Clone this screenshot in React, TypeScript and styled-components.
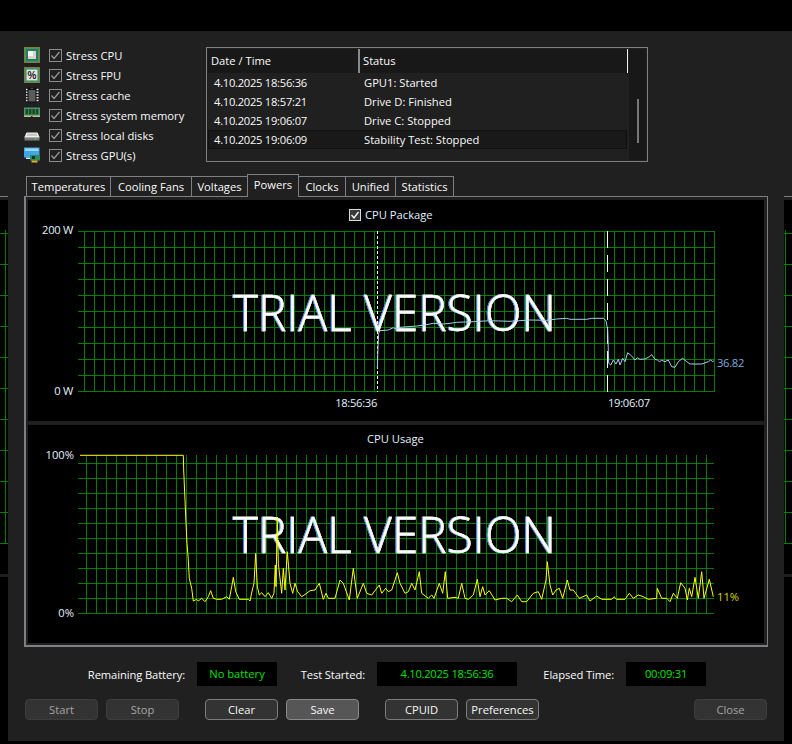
import React from 'react'
import styled, { createGlobalStyle } from 'styled-components'

const GlobalStyle = createGlobalStyle`
    html, body {
        margin: 0;
        padding: 0;
        background: #000;
    }
    body {
        font-family: "Open Sans", "Noto Sans", sans-serif;
        font-size: 11.2px;
        color: #fafafa;
    }
`

const FRAME = '#7e7e84'

const stressItems = [
    { label: 'Stress CPU', icon: 'cpu' },
    { label: 'Stress FPU', icon: 'fpu' },
    { label: 'Stress cache', icon: 'cache' },
    { label: 'Stress system memory', icon: 'memory' },
    { label: 'Stress local disks', icon: 'disk' },
    { label: 'Stress GPU(s)', icon: 'gpu' },
]

const logRows = [
    { time: '4.10.2025 18:56:36', status: 'GPU1: Started' },
    { time: '4.10.2025 18:57:21', status: 'Drive D: Finished' },
    { time: '4.10.2025 19:06:07', status: 'Drive C: Stopped' },
    { time: '4.10.2025 19:06:09', status: 'Stability Test: Stopped', selected: true },
]

const tabs = [
    { label: 'Temperatures', width: 85 },
    { label: 'Cooling Fans', width: 82 },
    { label: 'Voltages', width: 57 },
    { label: 'Powers', width: 52, active: true },
    { label: 'Clocks', width: 48 },
    { label: 'Unified', width: 51 },
    { label: 'Statistics', width: 59 },
]

// values read off the picture, in zoomed crop coordinates (3x), converted below
const toPage = (pts: number[][], ox: number, oy: number) =>
    pts.map(([x, y]) => `${(ox + x / 3).toFixed(1)},${(oy + y / 3).toFixed(1)}`).join(' ')

const powerLine = [
    toPage([[1132, 535], [1134, 470], [1136, 430], [1140, 422], [1165, 420], [1180, 413], [1190, 418], [1200, 412]], 0, 190),
    toPage([[0, 412], [50, 408], [75, 405], [100, 400], [130, 402], [150, 400], [170, 397], [220, 395], [270, 392], [330, 394], [390, 390], [440, 391], [470, 387], [500, 385], [510, 388], [560, 388], [575, 385], [610, 385], [618, 392], [623, 420], [625, 480], [626, 520], [632, 525], [640, 510], [648, 522], [655, 508], [660, 525], [668, 505], [675, 515], [683, 488], [695, 498], [705, 510], [712, 503], [720, 508], [735, 507], [748, 500], [755, 494], [765, 508], [772, 510], [778, 515], [785, 511], [795, 515], [805, 510], [815, 530], [825, 532], [835, 515], [848, 505], [860, 515], [870, 522], [905, 522], [925, 515], [932, 510], [938, 515], [942, 512]], 400, 190),
].join(' ')

const usageLine = [
    toPage([[240, 106], [550, 106], [551, 150], [555, 240], [558, 310], [561, 370], [565, 420], [568, 475], [575, 505], [580, 543], [590, 538], [595, 543], [605, 535], [615, 545], [625, 530], [632, 512], [640, 535], [650, 538], [665, 538], [680, 530], [688, 538], [695, 500], [700, 472], [707, 515], [718, 538], [745, 538], [750, 543], [757, 510], [762, 490], [767, 400], [772, 500], [778, 525], [785, 518], [795, 530], [805, 518], [815, 535], [822, 520], [826, 435], [828, 500], [832, 292], [835, 430], [845, 520], [850, 445], [855, 510], [862, 395], [870, 490], [878, 520], [885, 490], [893, 515], [905, 530], [920, 520], [930, 512], [945, 510], [958, 490], [970, 538], [978, 520], [985, 535], [1005, 535], [1020, 480], [1030, 490], [1048, 540], [1060, 445], [1072, 535], [1090, 490], [1100, 520], [1115, 525], [1138, 495], [1145, 520], [1157, 505], [1165, 515], [1175, 510], [1185, 480], [1192, 458]], 0, 420),
    toPage([[0, 490], [15, 520], [25, 515], [35, 490], [45, 510], [58, 455], [65, 520], [85, 535], [95, 525], [102, 535], [118, 490], [128, 520], [136, 455], [143, 535], [165, 532], [175, 535], [185, 490], [195, 535], [205, 538], [220, 525], [232, 478], [240, 530], [248, 500], [255, 525], [268, 512], [285, 540], [305, 535], [320, 535], [335, 545], [352, 525], [365, 545], [380, 545], [400, 520], [415, 515], [425, 538], [438, 480], [442, 425], [450, 495], [458, 525], [468, 510], [478, 505], [488, 535], [502, 480], [510, 510], [520, 510], [538, 535], [560, 525], [570, 543], [590, 528], [605, 538], [635, 538], [642, 530], [650, 538], [675, 538], [688, 520], [700, 535], [715, 525], [730, 530], [745, 538], [770, 535], [772, 505], [785, 535], [800, 535], [810, 545], [820, 520], [832, 535], [842, 488], [855, 505], [862, 540], [868, 505], [875, 530], [885, 472], [895, 535], [905, 455], [912, 535], [928, 478], [940, 530]], 400, 420),
].join(' ')

const range = (count: number, start: number, step: number) =>
    Array.from({ length: count }, (_, i) => start + i * step)

const ChipFrame: React.FC<{ children: React.ReactNode }> = ({ children }) => (
    <svg width="16" height="16" viewBox="0 0 16 16">
        <rect x="0.5" y="0.5" width="15" height="15" fill="#2c7a58" stroke="#e0ad3a" strokeDasharray="1 1" />
        <rect x="1.5" y="1.5" width="13" height="13" fill="none" stroke="#3f9470" />
        {children}
    </svg>
)

const StressIcon: React.FC<{ kind: string }> = ({ kind }) => {
    if (kind === 'cpu') {
        return (
            <ChipFrame>
                <rect x="4" y="4" width="8" height="8" fill="#d4d4d0" />
                <rect x="4" y="4" width="5" height="5" fill="#f4f4f2" />
            </ChipFrame>
        )
    }
    if (kind === 'fpu') {
        return (
            <ChipFrame>
                <rect x="2.5" y="2.5" width="11" height="11" fill="#e4e6de" />
                <text x="8" y="12" textAnchor="middle" fontSize="10" fontWeight="700" fontFamily="Liberation Sans" fill="#222">%</text>
            </ChipFrame>
        )
    }
    if (kind === 'cache') {
        return (
            <svg width="16" height="16" viewBox="0 0 16 16">
                {range(5, 2.5, 2.75).map(y => (
                    <path key={y} d={`M2 ${y}H14.5`} stroke="#e8e8e8" strokeWidth="1.4" />
                ))}
                <path d="M3.5 0.5H6.5V2H9.5V0.5H12.5V15.5H3.5Z" fill="#0c0c0c" />
                <rect x="4.5" y="3" width="7" height="11.5" fill="#5c5c5c" />
            </svg>
        )
    }
    if (kind === 'memory') {
        return (
            <svg width="16" height="16" viewBox="0 0 16 16">
                <rect x="0" y="0.5" width="16" height="9" fill="#3f9a68" />
                {range(4, 1.5, 3.4).map(x => (
                    <rect key={x} x={x} y="2" width="2.6" height="5.5" fill="#27412f" />
                ))}
                <rect x="0" y="8.5" width="16" height="1.5" fill="#b9c47a" />
                <rect x="7" y="9" width="1.5" height="1.5" fill="#202020" />
            </svg>
        )
    }
    if (kind === 'disk') {
        return (
            <svg width="16" height="16" viewBox="0 0 16 16">
                <path d="M2.5 5.5H13.5L15.5 10H0.5Z" fill="#f0f0f0" />
                <path d="M3.5 6.5H12.5L13.5 9H2.5Z" fill="#c8c8c8" />
                <rect x="0.5" y="10" width="15" height="3.5" fill="#7c7c7c" />
                <rect x="0.5" y="10" width="15" height="1" fill="#a8a8a8" />
                <rect x="11" y="11.3" width="1.6" height="1.4" fill="#3fdc4a" />
            </svg>
        )
    }
    return (
        <svg width="16" height="16" viewBox="0 0 16 16">
            <rect x="0" y="0.5" width="15.5" height="10" fill="#3fa6ec" />
            <rect x="1" y="1.5" width="13.5" height="2.5" fill="#9fd6fa" />
            <rect x="2" y="10.5" width="7" height="1.5" fill="#d6e6f2" />
            <rect x="6" y="8" width="10" height="5.5" fill="#2f8a5a" />
            <rect x="8" y="9" width="3" height="3" fill="#12351f" />
            <rect x="7.5" y="13.5" width="6" height="2" fill="#e8b030" />
        </svg>
    )
}

const PowerChart: React.FC = () => (
    <ChartSvg viewBox="28 200 736 221">
        {range(11, 231.5, 16).map(y => (
            <path key={y} d={`M78 ${y}H715`} stroke="#008000" />
        ))}
        {range(64, 84.5, 10).map(x => (
            <path key={x} d={`M${x} 231V392`} stroke="#008000" />
        ))}
        <Watermark x="233" y="331" textLength="323" lengthAdjust="spacingAndGlyphs">TRIAL VERSION</Watermark>
        <path d="M377.5 231V392" stroke="#fff" strokeDasharray="3 2" />
        <path d="M607.5 231V392" stroke="#fff" strokeDasharray="17 7" />
        <polyline points={powerLine} fill="none" stroke="#a9cdf2" />
        <rect x="349.5" y="209.5" width="11" height="11" fill="#3a3a3a" stroke="#d8d8d8" />
        <path d="M351.5 215L354 218L358.5 212" fill="none" stroke="#fff" strokeWidth="1.3" />
        <ChartLabel x="365" y="219" fill="#e4f0fd">CPU Package</ChartLabel>
        <ChartValue x="73" y="234" textAnchor="end" fill="#e4f0fd">200 W</ChartValue>
        <ChartValue x="73" y="395" textAnchor="end" fill="#e4f0fd">0 W</ChartValue>
        <ChartValue x="377" y="407" textAnchor="end" fill="#e4f0fd">18:56:36</ChartValue>
        <ChartValue x="608" y="407" fill="#e4f0fd">19:06:07</ChartValue>
        <ChartValue x="717" y="367" fill="#7fa9dc">36.82</ChartValue>
    </ChartSvg>
)

const UsageChart: React.FC = () => (
    <ChartSvg viewBox="28 425 736 218">
        {range(11, 463.5, 15).map(y => (
            <path key={y} d={`M78 ${y}H714`} stroke="#008000" />
        ))}
        {range(63, 86.5, 10).map(x => (
            <path key={x} d={`M${x} 455V614`} stroke="#008000" />
        ))}
        <Watermark x="233" y="553" textLength="323" lengthAdjust="spacingAndGlyphs">TRIAL VERSION</Watermark>
        <polyline points={usageLine} fill="none" stroke="#ffff00" />
        <ChartLabel x="367" y="443" fill="#e4f0fd">CPU Usage</ChartLabel>
        <ChartLabel x="74" y="459" textAnchor="end" fill="#e4f0fd">100%</ChartLabel>
        <ChartLabel x="74" y="617" textAnchor="end" fill="#e4f0fd">0%</ChartLabel>
        <ChartLabel x="717" y="601" fill="#d8d800">11%</ChartLabel>
    </ChartSvg>
)

// Slivers of the same window lying behind this one
const BehindChart: React.FC<{ lineX: number }> = ({ lineX }) => (
    <svg width="8" height="314" viewBox="0 230 8 314">
        {range(11, 233.5, 31).map(y => (
            <path key={y} d={`M0 ${y}H8`} stroke="#008000" />
        ))}
        <path d={`M${lineX} 230V544`} stroke="#008000" />
    </svg>
)

const SideSliver: React.FC<{ lineX: number }> = ({ lineX }) => (
    <SideStrip>
        <StripLine />
        <StripPane>
            <BehindChart lineX={lineX} />
        </StripPane>
    </SideStrip>
)

const App: React.FC = () => {
    return (
        <Page>
            <GlobalStyle />
            <SideSliver lineX={5.5} />
            <Window>
                <TopSection>
                    <StressList>
                        {stressItems.map(item => (
                            <StressRow key={item.label}>
                                <IconSlot>
                                    <StressIcon kind={item.icon} />
                                </IconSlot>
                                <CheckBox>
                                    <svg width="11" height="11" viewBox="0 0 11 11">
                                        <path d="M1.5 5.5L4 8.5L9.5 2" fill="none" stroke="#9a9a9a" strokeWidth="1.2" />
                                    </svg>
                                </CheckBox>
                                {item.label}
                            </StressRow>
                        ))}
                    </StressList>
                    <LogPanel>
                        <LogBody>
                            <LogHeader>
                                <HeaderCell $width={152}>Date / Time</HeaderCell>
                                <HeaderCell $width={268} $last>Status</HeaderCell>
                            </LogHeader>
                            {logRows.map(row => (
                                <LogRow key={row.time} $selected={row.selected}>
                                    <TimeCell>{row.time}</TimeCell>
                                    <span>{row.status}</span>
                                </LogRow>
                            ))}
                        </LogBody>
                        <ScrollTrack>
                            <ScrollThumb />
                        </ScrollTrack>
                    </LogPanel>
                </TopSection>
                <TabBar>
                    {tabs.map(tab => (
                        <Tab key={tab.label} $width={tab.width} $active={tab.active}>{tab.label}</Tab>
                    ))}
                </TabBar>
                <ChartFrame>
                    <ChartPane $height={221}>
                        <PowerChart />
                    </ChartPane>
                    <ChartPane $height={218}>
                        <UsageChart />
                    </ChartPane>
                </ChartFrame>
                <InfoRow>
                    <InfoLabel $width={177}>Remaining Battery:</InfoLabel>
                    <InfoValue $width={80}>No battery</InfoValue>
                    <InfoLabel $width={88}>Test Started:</InfoLabel>
                    <InfoValue $width={140} $tight>4.10.2025 18:56:36</InfoValue>
                    <InfoLabel $width={97}>Elapsed Time:</InfoLabel>
                    <InfoValue $width={80} $tight>00:09:31</InfoValue>
                </InfoRow>
                <ButtonRow>
                    <Button disabled>Start</Button>
                    <Button disabled $gap={8}>Stop</Button>
                    <Button $gap={26}>Clear</Button>
                    <Button $gap={8} $focused>Save</Button>
                    <Button $gap={26}>CPUID</Button>
                    <Button $gap={8}>Preferences</Button>
                    <Button disabled $gap={155}>Close</Button>
                </ButtonRow>
            </Window>
            <SideSliver lineX={1.5} />
        </Page>
    )
}

export default App

const Page = styled.div`
    display: flex;
    align-items: flex-start;
    width: 792px;
    height: 744px;
    overflow: hidden;
    background: #000;
`

const SideStrip = styled.div`
    display: flex;
    flex-direction: column;
    width: 8px;
    height: 546px;
    margin-top: 31px;
    padding: 165px 0 3px;
    box-sizing: border-box;
    background: #202020;
`

const StripLine = styled.div`
    height: 1px;
    margin-bottom: 3px;
    background: ${FRAME};
`

const StripPane = styled.div`
    flex: 1;
    padding-top: 30px;
    background: #000;

    svg {
        display: block;
    }
`

const Window = styled.div`
    flex-shrink: 0;
    width: 776px;
    height: 710px;
    margin-top: 31px;
    background: #202020;
    display: flex;
    flex-direction: column;
`

const TopSection = styled.div`
    display: flex;
    height: 143px;
    padding: 14px 0 0 16px;
    box-sizing: border-box;
`

const StressList = styled.div`
    display: flex;
    flex-direction: column;
    width: 182px;
`

const StressRow = styled.div`
    display: flex;
    align-items: center;
    height: 20px;
    white-space: nowrap;
`

const IconSlot = styled.span`
    display: flex;
    width: 16px;
    height: 16px;
    margin-right: 9px;
`

const CheckBox = styled.span`
    display: flex;
    width: 11px;
    height: 11px;
    margin-right: 4px;
    border: 1px solid #8c8c8c;
`

const LogPanel = styled.div`
    display: flex;
    width: 442px;
    height: 115px;
    margin-top: 2px;
    padding: 1px;
    box-sizing: border-box;
    border: 1px solid ${FRAME};
`

const LogBody = styled.div`
    width: 420px;
`

const LogHeader = styled.div`
    display: flex;
    height: 24px;
    background: #181818;
`

const HeaderCell = styled.div<{ $width: number, $last?: boolean }>`
    width: ${p => p.$width}px;
    padding-left: 3px;
    box-sizing: border-box;
    line-height: 24px;
    border-right: ${p => (p.$last ? '1px solid #f0f0f0' : '2px solid #8a8a8a')};
`

const LogRow = styled.div<{ $selected?: boolean }>`
    display: flex;
    height: 19px;
    width: 419px;
    padding-left: 5px;
    box-sizing: border-box;
    line-height: 18px;
    background: ${p => (p.$selected ? '#191919' : 'transparent')};
    border: 1px solid ${p => (p.$selected ? '#101010' : 'transparent')};
`

const TimeCell = styled.span`
    width: 150px;
    letter-spacing: -0.27px;
`

const ScrollTrack = styled.div`
    display: flex;
    justify-content: center;
    width: 17px;
    margin-left: 1px;
    padding-top: 50px;
    box-sizing: border-box;
    background: #181818;
`

const ScrollThumb = styled.div`
    width: 2px;
    height: 44px;
    background: #777;
`

const TabBar = styled.div`
    display: flex;
    align-items: flex-end;
    height: 22px;
    padding-left: 19px;
    position: relative;
    z-index: 1;
`

const Tab = styled.div<{ $width: number, $active?: boolean }>`
    width: ${p => p.$width}px;
    height: ${p => (p.$active ? 23 : 20)}px;
    margin-left: -1px;
    margin-bottom: ${p => (p.$active ? -1 : 0)}px;
    line-height: 19px;
    text-align: center;
    box-sizing: border-box;
    border: 1px solid ${FRAME};
    border-bottom: 0;
    background: #202020;
    color: #fafafa;
    white-space: nowrap;
    position: relative;
    z-index: ${p => (p.$active ? 1 : 0)};
`

const ChartFrame = styled.div`
    display: flex;
    flex-direction: column;
    gap: 4px;
    width: 744px;
    height: 451px;
    margin-left: 16px;
    padding: 3px 3px 2px 2px;
    box-sizing: border-box;
    border: solid ${FRAME};
    border-width: 1px 1px 2px 2px;
`

const ChartPane = styled.div<{ $height: number }>`
    height: ${p => p.$height}px;
    background: #000;
`

const ChartSvg = styled.svg`
    display: block;
    width: 736px;
    height: 100%;
`

const ChartLabel = styled.text`
    font-family: "Open Sans", "Noto Sans", sans-serif;
    font-size: 11.2px;
`

const ChartValue = styled(ChartLabel)`
    letter-spacing: -0.3px;
`

const Watermark = styled.text`
    font-family: "Open Sans", "Noto Sans", sans-serif;
    font-size: 50px;
    font-weight: 300;
    fill: #fff;
    stroke: #fff;
    stroke-width: 0.4px;
    filter: drop-shadow(-0.6px 0 0 #2f8cff) drop-shadow(0.6px 0 0 #e0861f);
`

const InfoRow = styled.div`
    display: flex;
    align-items: center;
    height: 24px;
    margin-top: 15px;
`

const InfoLabel = styled.span<{ $width: number }>`
    width: ${p => p.$width}px;
    margin-right: 12px;
    text-align: right;
    white-space: nowrap;
    letter-spacing: -0.1px;
`

const InfoValue = styled.div<{ $width: number, $tight?: boolean }>`
    width: ${p => p.$width}px;
    height: 24px;
    line-height: 24px;
    text-align: center;
    letter-spacing: ${p => (p.$tight ? '-0.27px' : 'normal')};
    background: #000;
    color: #00e000;
`

const ButtonRow = styled.div`
    display: flex;
    height: 21px;
    margin-top: 13px;
    padding-left: 17px;
`

const Button = styled.button<{ $gap?: number, $focused?: boolean }>`
    width: 73px;
    height: 21px;
    padding: 0;
    margin-left: ${p => p.$gap ?? 0}px;
    font: inherit;
    color: #f8f8f8;
    background: ${p => (p.$focused ? '#565656' : '#333')};
    border: 1px solid ${p => (p.$focused ? '#8a8a8a' : '#7c7c7c')};
    border-radius: 4px;

    &:disabled {
        color: #a4a4a4;
        background: #333;
        border-color: #3e3e3e;
    }
`
